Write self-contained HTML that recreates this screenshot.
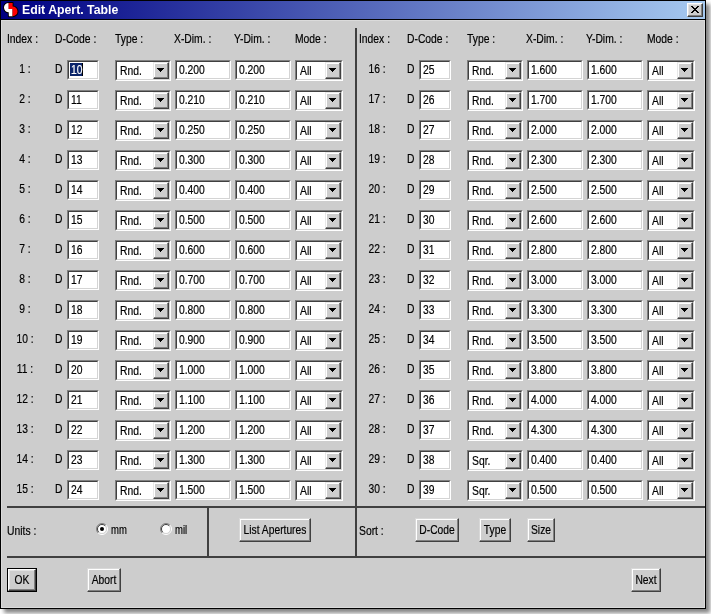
<!DOCTYPE html>
<html><head><meta charset="utf-8"><title>Edit Apert. Table</title>
<style>
html,body{margin:0;padding:0;background:#fff;}
body{width:711px;height:614px;position:relative;overflow:hidden;font-family:"Liberation Sans",sans-serif;font-size:13px;line-height:13px;color:#000;}
.a{position:absolute;}
#root{position:absolute;left:0;top:0;width:711px;height:614px;}
#tx{position:absolute;left:0;top:0;width:711px;height:614px;will-change:transform;-webkit-text-stroke:0.2px;}
#win{left:0;top:0;width:704px;height:607px;border:1px solid #000;background:#cdcdcd;box-shadow:4px 4px 4px rgba(0,0,0,.48);}
#tb{left:1px;top:1px;width:704px;height:18px;background:linear-gradient(90deg,#000080 0%,#040686 4%,#a6caf0 100%);}
#tbl{left:1px;top:19px;width:704px;height:1px;background:#000;}
#hl{left:1px;top:20px;width:702px;height:586px;border:1px solid #dbdbdb;}
.t{position:absolute;white-space:nowrap;transform:scaleX(.795);transform-origin:0 0;}
.c{position:absolute;white-space:nowrap;width:120px;text-align:center;transform:scaleX(.79);transform-origin:50% 0;}
.ln{position:absolute;background:#404040;}
.ed{position:absolute;box-sizing:border-box;height:20px;background:#fff;border:1px solid;border-color:#808080 #fff #fff #808080;}
.ed i{position:absolute;left:0;top:0;right:0;bottom:0;border:1px solid;border-color:#404040 #d4d4d4 #d4d4d4 #404040;}
.cb{position:absolute;box-sizing:border-box;height:21px;background:#fff;border:1px solid;border-color:#808080 #fff #fff #808080;}
.cb i{position:absolute;left:0;top:0;right:0;bottom:0;border:1px solid;border-color:#404040 #d4d4d4 #d4d4d4 #404040;}
.dd{position:absolute;right:1px;top:1px;width:14px;height:15px;background:#cdcdcd;border:1px solid;border-color:#e8e8e8 #404040 #404040 #e8e8e8;box-shadow:inset -1px -1px 0 #808080, inset 1px 1px 0 #fff;}
.dd:after{content:"";position:absolute;left:3px;top:5px;width:7px;height:4px;background:linear-gradient(#000,#000) 0 0/7px 1px no-repeat,linear-gradient(#000,#000) 1px 1px/5px 1px no-repeat,linear-gradient(#000,#000) 2px 2px/3px 1px no-repeat,linear-gradient(#000,#000) 3px 3px/1px 1px no-repeat;}
.bt{position:absolute;height:22px;background:#cdcdcd;border:1px solid;border-color:#fff #404040 #404040 #fff;box-shadow:inset -1px -1px 0 #808080, inset 1px 1px 0 #e2e2e2;}
.bn{border-color:#d8d8d8 #404040 #404040 #d8d8d8;box-shadow:inset -1px -1px 0 #808080, inset 1px 1px 0 #fff;}
</style></head>
<body>
<div id="root">
<div id="win" class="a"></div><div id="tb" class="a"></div><div id="tbl" class="a"></div><div id="hl" class="a"></div>
<svg class="a" style="left:0;top:0" width="24" height="20" viewBox="0 0 24 20"><g transform="translate(3,2)">
<path d="M5.7,0.9A4.7,4.7 0 0 0 5.7,10.3L5.9,14.3L9.55,14.3L9.55,7L5.7,7Z M5.7,0.9L9.6,0.9L9.6,4.5A4.9,4.9 0 0 1 9.6,14.3L9.55,14.3L9.55,7L5.7,7Z" fill="#000" stroke="#000" stroke-width="2" stroke-linejoin="round"/>
<path d="M5.7,0.9A4.7,4.7 0 0 0 5.7,10.3L5.9,14.3L9.55,14.3L9.55,7L5.7,7Z" fill="#fff"/>
<path d="M5.7,0.9L9.6,0.9L9.6,4.5A4.9,4.9 0 0 1 9.6,14.3L9.55,14.3L9.55,7L5.7,7Z" fill="#f00"/>
</g></svg>
<div class="bt" style="left:687px;top:3px;width:14px;height:12px"></div>
<svg class="a" style="left:691px;top:6px" width="8" height="7" viewBox="0 0 8 7" shape-rendering="crispEdges"><path d="M0 0h2v1h1v1h2v-1h1v-1h2v1h-1v1h-1v1h-1v1h1v1h1v1h1v1h-2v-1h-1v-1h-2v1h-1v1h-2v-1h1v-1h1v-1h1v-1h-1v-1h-1v-1h-1z" fill="#000"/></svg>
<div class="ln" style="left:355px;top:28px;width:2px;height:530px"></div>
<div class="ln" style="left:7px;top:506px;width:698px;height:2px"></div>
<div class="ln" style="left:7px;top:556px;width:698px;height:2px"></div>
<div class="ln" style="left:207px;top:506px;width:2px;height:52px"></div>
<div class="ed" style="left:67px;top:60px;width:32px"><i></i><b class="a" style="left:2px;top:2px;width:12px;height:13px;background:#0a246a"></b><b class="a" style="left:14px;top:2px;width:1px;height:13px;background:#000"></b></div>
<div class="cb" style="left:115px;top:60px;width:56px"><i></i><div class="dd"></div></div>
<div class="ed" style="left:175px;top:60px;width:56px"><i></i></div>
<div class="ed" style="left:235px;top:60px;width:56px"><i></i></div>
<div class="cb" style="left:295px;top:60px;width:48px"><i></i><div class="dd"></div></div>
<div class="ed" style="left:67px;top:90px;width:32px"><i></i></div>
<div class="cb" style="left:115px;top:90px;width:56px"><i></i><div class="dd"></div></div>
<div class="ed" style="left:175px;top:90px;width:56px"><i></i></div>
<div class="ed" style="left:235px;top:90px;width:56px"><i></i></div>
<div class="cb" style="left:295px;top:90px;width:48px"><i></i><div class="dd"></div></div>
<div class="ed" style="left:67px;top:120px;width:32px"><i></i></div>
<div class="cb" style="left:115px;top:120px;width:56px"><i></i><div class="dd"></div></div>
<div class="ed" style="left:175px;top:120px;width:56px"><i></i></div>
<div class="ed" style="left:235px;top:120px;width:56px"><i></i></div>
<div class="cb" style="left:295px;top:120px;width:48px"><i></i><div class="dd"></div></div>
<div class="ed" style="left:67px;top:150px;width:32px"><i></i></div>
<div class="cb" style="left:115px;top:150px;width:56px"><i></i><div class="dd"></div></div>
<div class="ed" style="left:175px;top:150px;width:56px"><i></i></div>
<div class="ed" style="left:235px;top:150px;width:56px"><i></i></div>
<div class="cb" style="left:295px;top:150px;width:48px"><i></i><div class="dd"></div></div>
<div class="ed" style="left:67px;top:180px;width:32px"><i></i></div>
<div class="cb" style="left:115px;top:180px;width:56px"><i></i><div class="dd"></div></div>
<div class="ed" style="left:175px;top:180px;width:56px"><i></i></div>
<div class="ed" style="left:235px;top:180px;width:56px"><i></i></div>
<div class="cb" style="left:295px;top:180px;width:48px"><i></i><div class="dd"></div></div>
<div class="ed" style="left:67px;top:210px;width:32px"><i></i></div>
<div class="cb" style="left:115px;top:210px;width:56px"><i></i><div class="dd"></div></div>
<div class="ed" style="left:175px;top:210px;width:56px"><i></i></div>
<div class="ed" style="left:235px;top:210px;width:56px"><i></i></div>
<div class="cb" style="left:295px;top:210px;width:48px"><i></i><div class="dd"></div></div>
<div class="ed" style="left:67px;top:240px;width:32px"><i></i></div>
<div class="cb" style="left:115px;top:240px;width:56px"><i></i><div class="dd"></div></div>
<div class="ed" style="left:175px;top:240px;width:56px"><i></i></div>
<div class="ed" style="left:235px;top:240px;width:56px"><i></i></div>
<div class="cb" style="left:295px;top:240px;width:48px"><i></i><div class="dd"></div></div>
<div class="ed" style="left:67px;top:270px;width:32px"><i></i></div>
<div class="cb" style="left:115px;top:270px;width:56px"><i></i><div class="dd"></div></div>
<div class="ed" style="left:175px;top:270px;width:56px"><i></i></div>
<div class="ed" style="left:235px;top:270px;width:56px"><i></i></div>
<div class="cb" style="left:295px;top:270px;width:48px"><i></i><div class="dd"></div></div>
<div class="ed" style="left:67px;top:300px;width:32px"><i></i></div>
<div class="cb" style="left:115px;top:300px;width:56px"><i></i><div class="dd"></div></div>
<div class="ed" style="left:175px;top:300px;width:56px"><i></i></div>
<div class="ed" style="left:235px;top:300px;width:56px"><i></i></div>
<div class="cb" style="left:295px;top:300px;width:48px"><i></i><div class="dd"></div></div>
<div class="ed" style="left:67px;top:330px;width:32px"><i></i></div>
<div class="cb" style="left:115px;top:330px;width:56px"><i></i><div class="dd"></div></div>
<div class="ed" style="left:175px;top:330px;width:56px"><i></i></div>
<div class="ed" style="left:235px;top:330px;width:56px"><i></i></div>
<div class="cb" style="left:295px;top:330px;width:48px"><i></i><div class="dd"></div></div>
<div class="ed" style="left:67px;top:360px;width:32px"><i></i></div>
<div class="cb" style="left:115px;top:360px;width:56px"><i></i><div class="dd"></div></div>
<div class="ed" style="left:175px;top:360px;width:56px"><i></i></div>
<div class="ed" style="left:235px;top:360px;width:56px"><i></i></div>
<div class="cb" style="left:295px;top:360px;width:48px"><i></i><div class="dd"></div></div>
<div class="ed" style="left:67px;top:390px;width:32px"><i></i></div>
<div class="cb" style="left:115px;top:390px;width:56px"><i></i><div class="dd"></div></div>
<div class="ed" style="left:175px;top:390px;width:56px"><i></i></div>
<div class="ed" style="left:235px;top:390px;width:56px"><i></i></div>
<div class="cb" style="left:295px;top:390px;width:48px"><i></i><div class="dd"></div></div>
<div class="ed" style="left:67px;top:420px;width:32px"><i></i></div>
<div class="cb" style="left:115px;top:420px;width:56px"><i></i><div class="dd"></div></div>
<div class="ed" style="left:175px;top:420px;width:56px"><i></i></div>
<div class="ed" style="left:235px;top:420px;width:56px"><i></i></div>
<div class="cb" style="left:295px;top:420px;width:48px"><i></i><div class="dd"></div></div>
<div class="ed" style="left:67px;top:450px;width:32px"><i></i></div>
<div class="cb" style="left:115px;top:450px;width:56px"><i></i><div class="dd"></div></div>
<div class="ed" style="left:175px;top:450px;width:56px"><i></i></div>
<div class="ed" style="left:235px;top:450px;width:56px"><i></i></div>
<div class="cb" style="left:295px;top:450px;width:48px"><i></i><div class="dd"></div></div>
<div class="ed" style="left:67px;top:480px;width:32px"><i></i></div>
<div class="cb" style="left:115px;top:480px;width:56px"><i></i><div class="dd"></div></div>
<div class="ed" style="left:175px;top:480px;width:56px"><i></i></div>
<div class="ed" style="left:235px;top:480px;width:56px"><i></i></div>
<div class="cb" style="left:295px;top:480px;width:48px"><i></i><div class="dd"></div></div>
<div class="ed" style="left:419px;top:60px;width:32px"><i></i></div>
<div class="cb" style="left:467px;top:60px;width:56px"><i></i><div class="dd"></div></div>
<div class="ed" style="left:527px;top:60px;width:56px"><i></i></div>
<div class="ed" style="left:587px;top:60px;width:56px"><i></i></div>
<div class="cb" style="left:647px;top:60px;width:48px"><i></i><div class="dd"></div></div>
<div class="ed" style="left:419px;top:90px;width:32px"><i></i></div>
<div class="cb" style="left:467px;top:90px;width:56px"><i></i><div class="dd"></div></div>
<div class="ed" style="left:527px;top:90px;width:56px"><i></i></div>
<div class="ed" style="left:587px;top:90px;width:56px"><i></i></div>
<div class="cb" style="left:647px;top:90px;width:48px"><i></i><div class="dd"></div></div>
<div class="ed" style="left:419px;top:120px;width:32px"><i></i></div>
<div class="cb" style="left:467px;top:120px;width:56px"><i></i><div class="dd"></div></div>
<div class="ed" style="left:527px;top:120px;width:56px"><i></i></div>
<div class="ed" style="left:587px;top:120px;width:56px"><i></i></div>
<div class="cb" style="left:647px;top:120px;width:48px"><i></i><div class="dd"></div></div>
<div class="ed" style="left:419px;top:150px;width:32px"><i></i></div>
<div class="cb" style="left:467px;top:150px;width:56px"><i></i><div class="dd"></div></div>
<div class="ed" style="left:527px;top:150px;width:56px"><i></i></div>
<div class="ed" style="left:587px;top:150px;width:56px"><i></i></div>
<div class="cb" style="left:647px;top:150px;width:48px"><i></i><div class="dd"></div></div>
<div class="ed" style="left:419px;top:180px;width:32px"><i></i></div>
<div class="cb" style="left:467px;top:180px;width:56px"><i></i><div class="dd"></div></div>
<div class="ed" style="left:527px;top:180px;width:56px"><i></i></div>
<div class="ed" style="left:587px;top:180px;width:56px"><i></i></div>
<div class="cb" style="left:647px;top:180px;width:48px"><i></i><div class="dd"></div></div>
<div class="ed" style="left:419px;top:210px;width:32px"><i></i></div>
<div class="cb" style="left:467px;top:210px;width:56px"><i></i><div class="dd"></div></div>
<div class="ed" style="left:527px;top:210px;width:56px"><i></i></div>
<div class="ed" style="left:587px;top:210px;width:56px"><i></i></div>
<div class="cb" style="left:647px;top:210px;width:48px"><i></i><div class="dd"></div></div>
<div class="ed" style="left:419px;top:240px;width:32px"><i></i></div>
<div class="cb" style="left:467px;top:240px;width:56px"><i></i><div class="dd"></div></div>
<div class="ed" style="left:527px;top:240px;width:56px"><i></i></div>
<div class="ed" style="left:587px;top:240px;width:56px"><i></i></div>
<div class="cb" style="left:647px;top:240px;width:48px"><i></i><div class="dd"></div></div>
<div class="ed" style="left:419px;top:270px;width:32px"><i></i></div>
<div class="cb" style="left:467px;top:270px;width:56px"><i></i><div class="dd"></div></div>
<div class="ed" style="left:527px;top:270px;width:56px"><i></i></div>
<div class="ed" style="left:587px;top:270px;width:56px"><i></i></div>
<div class="cb" style="left:647px;top:270px;width:48px"><i></i><div class="dd"></div></div>
<div class="ed" style="left:419px;top:300px;width:32px"><i></i></div>
<div class="cb" style="left:467px;top:300px;width:56px"><i></i><div class="dd"></div></div>
<div class="ed" style="left:527px;top:300px;width:56px"><i></i></div>
<div class="ed" style="left:587px;top:300px;width:56px"><i></i></div>
<div class="cb" style="left:647px;top:300px;width:48px"><i></i><div class="dd"></div></div>
<div class="ed" style="left:419px;top:330px;width:32px"><i></i></div>
<div class="cb" style="left:467px;top:330px;width:56px"><i></i><div class="dd"></div></div>
<div class="ed" style="left:527px;top:330px;width:56px"><i></i></div>
<div class="ed" style="left:587px;top:330px;width:56px"><i></i></div>
<div class="cb" style="left:647px;top:330px;width:48px"><i></i><div class="dd"></div></div>
<div class="ed" style="left:419px;top:360px;width:32px"><i></i></div>
<div class="cb" style="left:467px;top:360px;width:56px"><i></i><div class="dd"></div></div>
<div class="ed" style="left:527px;top:360px;width:56px"><i></i></div>
<div class="ed" style="left:587px;top:360px;width:56px"><i></i></div>
<div class="cb" style="left:647px;top:360px;width:48px"><i></i><div class="dd"></div></div>
<div class="ed" style="left:419px;top:390px;width:32px"><i></i></div>
<div class="cb" style="left:467px;top:390px;width:56px"><i></i><div class="dd"></div></div>
<div class="ed" style="left:527px;top:390px;width:56px"><i></i></div>
<div class="ed" style="left:587px;top:390px;width:56px"><i></i></div>
<div class="cb" style="left:647px;top:390px;width:48px"><i></i><div class="dd"></div></div>
<div class="ed" style="left:419px;top:420px;width:32px"><i></i></div>
<div class="cb" style="left:467px;top:420px;width:56px"><i></i><div class="dd"></div></div>
<div class="ed" style="left:527px;top:420px;width:56px"><i></i></div>
<div class="ed" style="left:587px;top:420px;width:56px"><i></i></div>
<div class="cb" style="left:647px;top:420px;width:48px"><i></i><div class="dd"></div></div>
<div class="ed" style="left:419px;top:450px;width:32px"><i></i></div>
<div class="cb" style="left:467px;top:450px;width:56px"><i></i><div class="dd"></div></div>
<div class="ed" style="left:527px;top:450px;width:56px"><i></i></div>
<div class="ed" style="left:587px;top:450px;width:56px"><i></i></div>
<div class="cb" style="left:647px;top:450px;width:48px"><i></i><div class="dd"></div></div>
<div class="ed" style="left:419px;top:480px;width:32px"><i></i></div>
<div class="cb" style="left:467px;top:480px;width:56px"><i></i><div class="dd"></div></div>
<div class="ed" style="left:527px;top:480px;width:56px"><i></i></div>
<div class="ed" style="left:587px;top:480px;width:56px"><i></i></div>
<div class="cb" style="left:647px;top:480px;width:48px"><i></i><div class="dd"></div></div>
<svg class="a" style="left:96px;top:523px" width="12" height="12" viewBox="0 0 12 12"><circle cx="6" cy="6" r="4.5" fill="#fff"/><path d="M2.1 9.9A5.5 5.5 0 0 1 9.9 2.1" fill="none" stroke="#808080" stroke-width="1"/><path d="M9.9 2.1A5.5 5.5 0 0 1 2.1 9.9" fill="none" stroke="#fff" stroke-width="1"/><path d="M2.8 9.2A4.5 4.5 0 0 1 9.2 2.8" fill="none" stroke="#404040" stroke-width="1"/><path d="M9.2 2.8A4.5 4.5 0 0 1 2.8 9.2" fill="none" stroke="#d4d4d4" stroke-width="1"/><circle cx="6" cy="6" r="2" fill="#000"/></svg>
<svg class="a" style="left:160px;top:523px" width="12" height="12" viewBox="0 0 12 12"><circle cx="6" cy="6" r="4.5" fill="#fff"/><path d="M2.1 9.9A5.5 5.5 0 0 1 9.9 2.1" fill="none" stroke="#808080" stroke-width="1"/><path d="M9.9 2.1A5.5 5.5 0 0 1 2.1 9.9" fill="none" stroke="#fff" stroke-width="1"/><path d="M2.8 9.2A4.5 4.5 0 0 1 9.2 2.8" fill="none" stroke="#404040" stroke-width="1"/><path d="M9.2 2.8A4.5 4.5 0 0 1 2.8 9.2" fill="none" stroke="#d4d4d4" stroke-width="1"/></svg>
<div class="bt bn" style="left:239px;top:518px;width:70px"></div>
<div class="bt bn" style="left:415px;top:518px;width:42px"></div>
<div class="bt bn" style="left:479px;top:518px;width:30px"></div>
<div class="bt bn" style="left:527px;top:518px;width:26px"></div>
<div class="a" style="left:7px;top:568px;width:28px;height:22px;border:1px solid #000"></div>
<div class="bt" style="left:8px;top:569px;width:26px;height:20px"></div>
<div class="bt bn" style="left:87px;top:568px;width:32px"></div>
<div class="bt bn" style="left:631px;top:568px;width:28px"></div>
</div>
<div id="tx">
<span class="t" style="left:21.5px;top:3px;color:#fff;font-weight:bold;transform:scaleX(.945);-webkit-text-stroke:0">Edit Apert. Table</span>
<span class="t" style="left:7.4px;top:32px;">Index :</span>
<span class="t" style="left:55.4px;top:32px;">D-Code :</span>
<span class="t" style="left:115.4px;top:32px;">Type :</span>
<span class="t" style="left:174.4px;top:32px;">X-Dim. :</span>
<span class="t" style="left:234.4px;top:32px;">Y-Dim. :</span>
<span class="t" style="left:295.4px;top:32px;">Mode :</span>
<span class="c" style="left:-35px;top:62px">1 :</span>
<span class="t" style="left:55px;top:62px;">D</span>
<span class="t" style="left:71px;top:63px;color:#fff">10</span>
<span class="t" style="left:119.5px;top:64px;">Rnd.</span>
<span class="t" style="left:179px;top:63px;">0.200</span>
<span class="t" style="left:239px;top:63px;">0.200</span>
<span class="t" style="left:299.5px;top:64px;">All</span>
<span class="c" style="left:-35px;top:92px">2 :</span>
<span class="t" style="left:55px;top:92px;">D</span>
<span class="t" style="left:71px;top:93px;">11</span>
<span class="t" style="left:119.5px;top:94px;">Rnd.</span>
<span class="t" style="left:179px;top:93px;">0.210</span>
<span class="t" style="left:239px;top:93px;">0.210</span>
<span class="t" style="left:299.5px;top:94px;">All</span>
<span class="c" style="left:-35px;top:122px">3 :</span>
<span class="t" style="left:55px;top:122px;">D</span>
<span class="t" style="left:71px;top:123px;">12</span>
<span class="t" style="left:119.5px;top:124px;">Rnd.</span>
<span class="t" style="left:179px;top:123px;">0.250</span>
<span class="t" style="left:239px;top:123px;">0.250</span>
<span class="t" style="left:299.5px;top:124px;">All</span>
<span class="c" style="left:-35px;top:152px">4 :</span>
<span class="t" style="left:55px;top:152px;">D</span>
<span class="t" style="left:71px;top:153px;">13</span>
<span class="t" style="left:119.5px;top:154px;">Rnd.</span>
<span class="t" style="left:179px;top:153px;">0.300</span>
<span class="t" style="left:239px;top:153px;">0.300</span>
<span class="t" style="left:299.5px;top:154px;">All</span>
<span class="c" style="left:-35px;top:182px">5 :</span>
<span class="t" style="left:55px;top:182px;">D</span>
<span class="t" style="left:71px;top:183px;">14</span>
<span class="t" style="left:119.5px;top:184px;">Rnd.</span>
<span class="t" style="left:179px;top:183px;">0.400</span>
<span class="t" style="left:239px;top:183px;">0.400</span>
<span class="t" style="left:299.5px;top:184px;">All</span>
<span class="c" style="left:-35px;top:212px">6 :</span>
<span class="t" style="left:55px;top:212px;">D</span>
<span class="t" style="left:71px;top:213px;">15</span>
<span class="t" style="left:119.5px;top:214px;">Rnd.</span>
<span class="t" style="left:179px;top:213px;">0.500</span>
<span class="t" style="left:239px;top:213px;">0.500</span>
<span class="t" style="left:299.5px;top:214px;">All</span>
<span class="c" style="left:-35px;top:242px">7 :</span>
<span class="t" style="left:55px;top:242px;">D</span>
<span class="t" style="left:71px;top:243px;">16</span>
<span class="t" style="left:119.5px;top:244px;">Rnd.</span>
<span class="t" style="left:179px;top:243px;">0.600</span>
<span class="t" style="left:239px;top:243px;">0.600</span>
<span class="t" style="left:299.5px;top:244px;">All</span>
<span class="c" style="left:-35px;top:272px">8 :</span>
<span class="t" style="left:55px;top:272px;">D</span>
<span class="t" style="left:71px;top:273px;">17</span>
<span class="t" style="left:119.5px;top:274px;">Rnd.</span>
<span class="t" style="left:179px;top:273px;">0.700</span>
<span class="t" style="left:239px;top:273px;">0.700</span>
<span class="t" style="left:299.5px;top:274px;">All</span>
<span class="c" style="left:-35px;top:302px">9 :</span>
<span class="t" style="left:55px;top:302px;">D</span>
<span class="t" style="left:71px;top:303px;">18</span>
<span class="t" style="left:119.5px;top:304px;">Rnd.</span>
<span class="t" style="left:179px;top:303px;">0.800</span>
<span class="t" style="left:239px;top:303px;">0.800</span>
<span class="t" style="left:299.5px;top:304px;">All</span>
<span class="c" style="left:-35px;top:332px">10 :</span>
<span class="t" style="left:55px;top:332px;">D</span>
<span class="t" style="left:71px;top:333px;">19</span>
<span class="t" style="left:119.5px;top:334px;">Rnd.</span>
<span class="t" style="left:179px;top:333px;">0.900</span>
<span class="t" style="left:239px;top:333px;">0.900</span>
<span class="t" style="left:299.5px;top:334px;">All</span>
<span class="c" style="left:-35px;top:362px">11 :</span>
<span class="t" style="left:55px;top:362px;">D</span>
<span class="t" style="left:71px;top:363px;">20</span>
<span class="t" style="left:119.5px;top:364px;">Rnd.</span>
<span class="t" style="left:179px;top:363px;">1.000</span>
<span class="t" style="left:239px;top:363px;">1.000</span>
<span class="t" style="left:299.5px;top:364px;">All</span>
<span class="c" style="left:-35px;top:392px">12 :</span>
<span class="t" style="left:55px;top:392px;">D</span>
<span class="t" style="left:71px;top:393px;">21</span>
<span class="t" style="left:119.5px;top:394px;">Rnd.</span>
<span class="t" style="left:179px;top:393px;">1.100</span>
<span class="t" style="left:239px;top:393px;">1.100</span>
<span class="t" style="left:299.5px;top:394px;">All</span>
<span class="c" style="left:-35px;top:422px">13 :</span>
<span class="t" style="left:55px;top:422px;">D</span>
<span class="t" style="left:71px;top:423px;">22</span>
<span class="t" style="left:119.5px;top:424px;">Rnd.</span>
<span class="t" style="left:179px;top:423px;">1.200</span>
<span class="t" style="left:239px;top:423px;">1.200</span>
<span class="t" style="left:299.5px;top:424px;">All</span>
<span class="c" style="left:-35px;top:452px">14 :</span>
<span class="t" style="left:55px;top:452px;">D</span>
<span class="t" style="left:71px;top:453px;">23</span>
<span class="t" style="left:119.5px;top:454px;">Rnd.</span>
<span class="t" style="left:179px;top:453px;">1.300</span>
<span class="t" style="left:239px;top:453px;">1.300</span>
<span class="t" style="left:299.5px;top:454px;">All</span>
<span class="c" style="left:-35px;top:482px">15 :</span>
<span class="t" style="left:55px;top:482px;">D</span>
<span class="t" style="left:71px;top:483px;">24</span>
<span class="t" style="left:119.5px;top:484px;">Rnd.</span>
<span class="t" style="left:179px;top:483px;">1.500</span>
<span class="t" style="left:239px;top:483px;">1.500</span>
<span class="t" style="left:299.5px;top:484px;">All</span>
<span class="t" style="left:359.4px;top:32px;">Index :</span>
<span class="t" style="left:407.4px;top:32px;">D-Code :</span>
<span class="t" style="left:467.4px;top:32px;">Type :</span>
<span class="t" style="left:526.4px;top:32px;">X-Dim. :</span>
<span class="t" style="left:586.4px;top:32px;">Y-Dim. :</span>
<span class="t" style="left:647.4px;top:32px;">Mode :</span>
<span class="c" style="left:317px;top:62px">16 :</span>
<span class="t" style="left:407px;top:62px;">D</span>
<span class="t" style="left:423px;top:63px;">25</span>
<span class="t" style="left:471.5px;top:64px;">Rnd.</span>
<span class="t" style="left:531px;top:63px;">1.600</span>
<span class="t" style="left:591px;top:63px;">1.600</span>
<span class="t" style="left:651.5px;top:64px;">All</span>
<span class="c" style="left:317px;top:92px">17 :</span>
<span class="t" style="left:407px;top:92px;">D</span>
<span class="t" style="left:423px;top:93px;">26</span>
<span class="t" style="left:471.5px;top:94px;">Rnd.</span>
<span class="t" style="left:531px;top:93px;">1.700</span>
<span class="t" style="left:591px;top:93px;">1.700</span>
<span class="t" style="left:651.5px;top:94px;">All</span>
<span class="c" style="left:317px;top:122px">18 :</span>
<span class="t" style="left:407px;top:122px;">D</span>
<span class="t" style="left:423px;top:123px;">27</span>
<span class="t" style="left:471.5px;top:124px;">Rnd.</span>
<span class="t" style="left:531px;top:123px;">2.000</span>
<span class="t" style="left:591px;top:123px;">2.000</span>
<span class="t" style="left:651.5px;top:124px;">All</span>
<span class="c" style="left:317px;top:152px">19 :</span>
<span class="t" style="left:407px;top:152px;">D</span>
<span class="t" style="left:423px;top:153px;">28</span>
<span class="t" style="left:471.5px;top:154px;">Rnd.</span>
<span class="t" style="left:531px;top:153px;">2.300</span>
<span class="t" style="left:591px;top:153px;">2.300</span>
<span class="t" style="left:651.5px;top:154px;">All</span>
<span class="c" style="left:317px;top:182px">20 :</span>
<span class="t" style="left:407px;top:182px;">D</span>
<span class="t" style="left:423px;top:183px;">29</span>
<span class="t" style="left:471.5px;top:184px;">Rnd.</span>
<span class="t" style="left:531px;top:183px;">2.500</span>
<span class="t" style="left:591px;top:183px;">2.500</span>
<span class="t" style="left:651.5px;top:184px;">All</span>
<span class="c" style="left:317px;top:212px">21 :</span>
<span class="t" style="left:407px;top:212px;">D</span>
<span class="t" style="left:423px;top:213px;">30</span>
<span class="t" style="left:471.5px;top:214px;">Rnd.</span>
<span class="t" style="left:531px;top:213px;">2.600</span>
<span class="t" style="left:591px;top:213px;">2.600</span>
<span class="t" style="left:651.5px;top:214px;">All</span>
<span class="c" style="left:317px;top:242px">22 :</span>
<span class="t" style="left:407px;top:242px;">D</span>
<span class="t" style="left:423px;top:243px;">31</span>
<span class="t" style="left:471.5px;top:244px;">Rnd.</span>
<span class="t" style="left:531px;top:243px;">2.800</span>
<span class="t" style="left:591px;top:243px;">2.800</span>
<span class="t" style="left:651.5px;top:244px;">All</span>
<span class="c" style="left:317px;top:272px">23 :</span>
<span class="t" style="left:407px;top:272px;">D</span>
<span class="t" style="left:423px;top:273px;">32</span>
<span class="t" style="left:471.5px;top:274px;">Rnd.</span>
<span class="t" style="left:531px;top:273px;">3.000</span>
<span class="t" style="left:591px;top:273px;">3.000</span>
<span class="t" style="left:651.5px;top:274px;">All</span>
<span class="c" style="left:317px;top:302px">24 :</span>
<span class="t" style="left:407px;top:302px;">D</span>
<span class="t" style="left:423px;top:303px;">33</span>
<span class="t" style="left:471.5px;top:304px;">Rnd.</span>
<span class="t" style="left:531px;top:303px;">3.300</span>
<span class="t" style="left:591px;top:303px;">3.300</span>
<span class="t" style="left:651.5px;top:304px;">All</span>
<span class="c" style="left:317px;top:332px">25 :</span>
<span class="t" style="left:407px;top:332px;">D</span>
<span class="t" style="left:423px;top:333px;">34</span>
<span class="t" style="left:471.5px;top:334px;">Rnd.</span>
<span class="t" style="left:531px;top:333px;">3.500</span>
<span class="t" style="left:591px;top:333px;">3.500</span>
<span class="t" style="left:651.5px;top:334px;">All</span>
<span class="c" style="left:317px;top:362px">26 :</span>
<span class="t" style="left:407px;top:362px;">D</span>
<span class="t" style="left:423px;top:363px;">35</span>
<span class="t" style="left:471.5px;top:364px;">Rnd.</span>
<span class="t" style="left:531px;top:363px;">3.800</span>
<span class="t" style="left:591px;top:363px;">3.800</span>
<span class="t" style="left:651.5px;top:364px;">All</span>
<span class="c" style="left:317px;top:392px">27 :</span>
<span class="t" style="left:407px;top:392px;">D</span>
<span class="t" style="left:423px;top:393px;">36</span>
<span class="t" style="left:471.5px;top:394px;">Rnd.</span>
<span class="t" style="left:531px;top:393px;">4.000</span>
<span class="t" style="left:591px;top:393px;">4.000</span>
<span class="t" style="left:651.5px;top:394px;">All</span>
<span class="c" style="left:317px;top:422px">28 :</span>
<span class="t" style="left:407px;top:422px;">D</span>
<span class="t" style="left:423px;top:423px;">37</span>
<span class="t" style="left:471.5px;top:424px;">Rnd.</span>
<span class="t" style="left:531px;top:423px;">4.300</span>
<span class="t" style="left:591px;top:423px;">4.300</span>
<span class="t" style="left:651.5px;top:424px;">All</span>
<span class="c" style="left:317px;top:452px">29 :</span>
<span class="t" style="left:407px;top:452px;">D</span>
<span class="t" style="left:423px;top:453px;">38</span>
<span class="t" style="left:471.5px;top:454px;">Sqr.</span>
<span class="t" style="left:531px;top:453px;">0.400</span>
<span class="t" style="left:591px;top:453px;">0.400</span>
<span class="t" style="left:651.5px;top:454px;">All</span>
<span class="c" style="left:317px;top:482px">30 :</span>
<span class="t" style="left:407px;top:482px;">D</span>
<span class="t" style="left:423px;top:483px;">39</span>
<span class="t" style="left:471.5px;top:484px;">Sqr.</span>
<span class="t" style="left:531px;top:483px;">0.500</span>
<span class="t" style="left:591px;top:483px;">0.500</span>
<span class="t" style="left:651.5px;top:484px;">All</span>
<span class="t" style="left:7.4px;top:524px;">Units :</span>
<span class="t" style="left:110.5px;top:523px;transform:scaleX(.73)">mm</span>
<span class="t" style="left:174.5px;top:523px;transform:scaleX(.73)">mil</span>
<span class="c" style="left:215.0px;top:523px">List Apertures</span>
<span class="t" style="left:359px;top:524px;">Sort :</span>
<span class="c" style="left:377.0px;top:523px">D-Code</span>
<span class="c" style="left:435.0px;top:523px">Type</span>
<span class="c" style="left:481.0px;top:523px">Size</span>
<span class="c" style="left:-38.0px;top:573px">OK</span>
<span class="c" style="left:44.0px;top:573px">Abort</span>
<span class="c" style="left:586.0px;top:573px">Next</span>
</div>
</body></html>
